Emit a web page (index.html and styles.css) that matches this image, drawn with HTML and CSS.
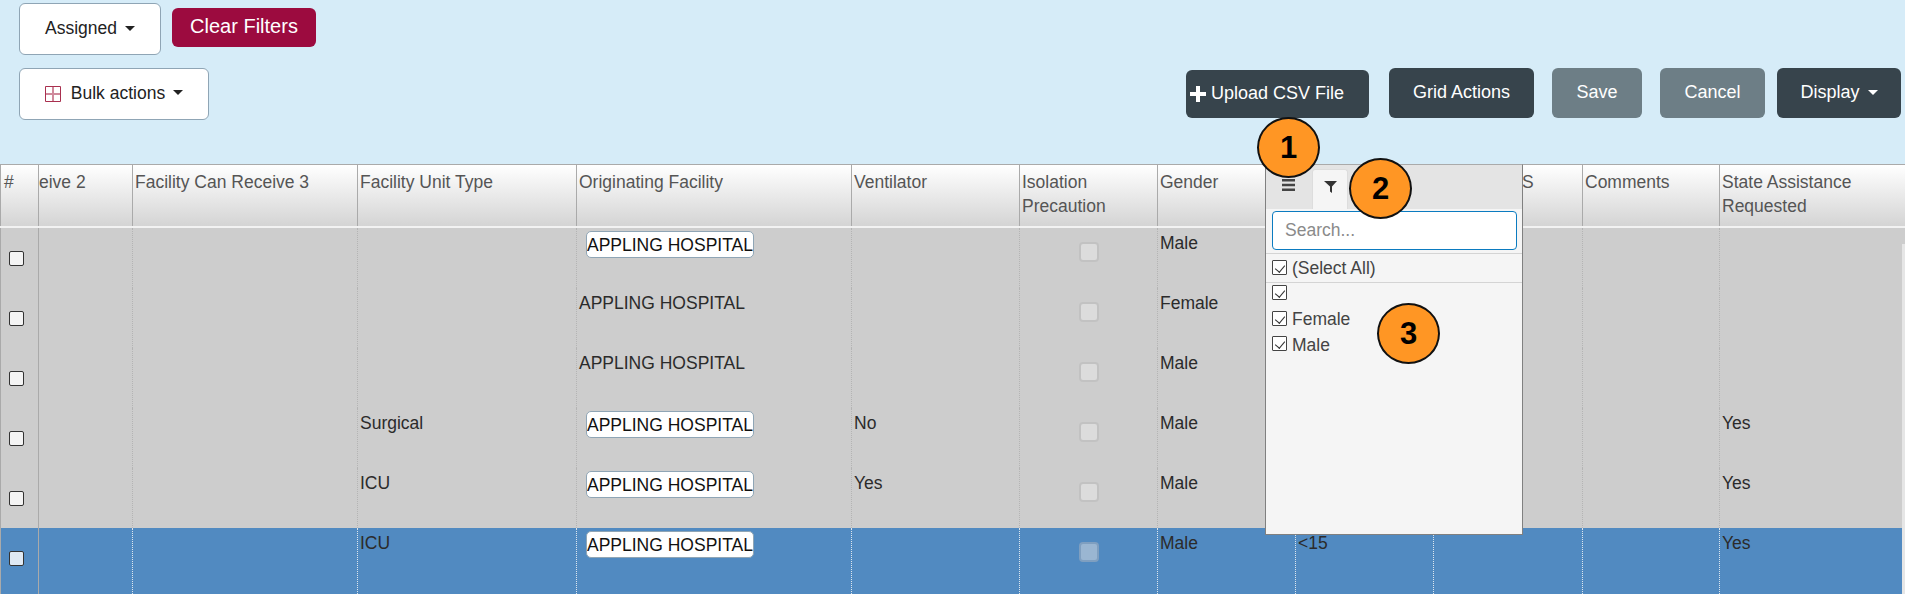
FILE: index.html
```html
<!DOCTYPE html>
<html lang="en">
<head>
  <meta charset="UTF-8" />
  <title>Patient Grid</title>
  <link rel="stylesheet" href="styles.css">
</head>
<body>

<div class="toolbar">
  <div class="filter-row">
    <button class="btn btn-light btn-assigned">Assigned <span class="caret"></span></button>
    <button class="btn btn-clear">Clear Filters</button>
  </div>
  <div class="action-row">
    <button class="btn btn-light btn-bulk">
      <svg class="bulk-icon" width="16" height="16" viewBox="0 0 16 16"><path d="M8 1v14M1 8h14" fill="none" stroke="#cf8a9c" stroke-width="2"/><path d="M.5.5h15v15H.5z" fill="none" stroke="#a9304f"/></svg>
      Bulk actions <span class="caret"></span>
    </button>
    <div class="grid-buttons">
      <button class="btn btn-dark btn-upload">
        <svg width="16" height="16" viewBox="0 0 16 16"><path d="M6 0h4v6h6v4h-6v6H6v-6H0V6h6z" fill="#fff"/></svg>
        Upload CSV File
      </button>
      <button class="btn btn-dark btn-grid">Grid Actions</button>
      <button class="btn btn-muted btn-save">Save</button>
      <button class="btn btn-muted btn-cancel">Cancel</button>
      <button class="btn btn-dark btn-display">Display <span class="caret"></span></button>
    </div>
  </div>
</div>

<div class="grid">
  <div class="row header">
    <div class="cell">#</div>
    <div class="cell clipped">eive 2</div>
    <div class="cell">Facility Can Receive 3</div>
    <div class="cell">Facility Unit Type</div>
    <div class="cell">Originating Facility</div>
    <div class="cell">Ventilator</div>
    <div class="cell">Isolation Precaution</div>
    <div class="cell">Gender</div>
    <div class="cell"></div>
    <div class="cell peek">S</div>
    <div class="cell">Comments</div>
    <div class="cell">State Assistance Requested</div>
  </div>

  <div class="row">
    <div class="cell"><span class="check"></span></div>
    <div class="cell"></div>
    <div class="cell"></div>
    <div class="cell"></div>
    <div class="cell"><span class="hospital">APPLING HOSPITAL</span></div>
    <div class="cell"></div>
    <div class="cell"><span class="check-off"></span></div>
    <div class="cell">Male</div>
    <div class="cell"></div>
    <div class="cell"></div>
    <div class="cell"></div>
    <div class="cell"></div>
  </div>
  <div class="row">
    <div class="cell"><span class="check"></span></div>
    <div class="cell"></div>
    <div class="cell"></div>
    <div class="cell"></div>
    <div class="cell">APPLING HOSPITAL</div>
    <div class="cell"></div>
    <div class="cell"><span class="check-off"></span></div>
    <div class="cell">Female</div>
    <div class="cell"></div>
    <div class="cell"></div>
    <div class="cell"></div>
    <div class="cell"></div>
  </div>
  <div class="row">
    <div class="cell"><span class="check"></span></div>
    <div class="cell"></div>
    <div class="cell"></div>
    <div class="cell"></div>
    <div class="cell">APPLING HOSPITAL</div>
    <div class="cell"></div>
    <div class="cell"><span class="check-off"></span></div>
    <div class="cell">Male</div>
    <div class="cell"></div>
    <div class="cell"></div>
    <div class="cell"></div>
    <div class="cell"></div>
  </div>
  <div class="row">
    <div class="cell"><span class="check"></span></div>
    <div class="cell"></div>
    <div class="cell"></div>
    <div class="cell">Surgical</div>
    <div class="cell"><span class="hospital">APPLING HOSPITAL</span></div>
    <div class="cell">No</div>
    <div class="cell"><span class="check-off"></span></div>
    <div class="cell">Male</div>
    <div class="cell"></div>
    <div class="cell"></div>
    <div class="cell"></div>
    <div class="cell">Yes</div>
  </div>
  <div class="row">
    <div class="cell"><span class="check"></span></div>
    <div class="cell"></div>
    <div class="cell"></div>
    <div class="cell">ICU</div>
    <div class="cell"><span class="hospital">APPLING HOSPITAL</span></div>
    <div class="cell">Yes</div>
    <div class="cell"><span class="check-off"></span></div>
    <div class="cell">Male</div>
    <div class="cell"></div>
    <div class="cell"></div>
    <div class="cell"></div>
    <div class="cell">Yes</div>
  </div>
  <div class="row selected">
    <div class="cell"><span class="check"></span></div>
    <div class="cell"></div>
    <div class="cell"></div>
    <div class="cell">ICU</div>
    <div class="cell"><span class="hospital">APPLING HOSPITAL</span></div>
    <div class="cell"></div>
    <div class="cell"><span class="check-off"></span></div>
    <div class="cell">Male</div>
    <div class="cell">&lt;15</div>
    <div class="cell"></div>
    <div class="cell"></div>
    <div class="cell">Yes</div>
  </div>

  <div class="scroll-strip"></div>
</div>

<div class="filter-menu">
  <div class="menu-tabs">
    <div class="menu-tab">
      <svg width="13" height="12" viewBox="0 0 13 12"><path d="M0 0h13v2.500H0zM0 4.700h13v2.500H0zM0 9.500h13V12H0z" fill="#444"/></svg>
    </div>
    <div class="menu-tab active">
      <svg width="13" height="12" viewBox="0 0 13 12"><path d="M0 0h13L8 5.500V12L6 10.500V5.500z" fill="#333"/></svg>
    </div>
  </div>
  <div class="menu-search"><input type="text" placeholder="Search..."></div>
  <div class="menu-all"><span class="tick"></span>(Select All)</div>
  <div class="menu-list">
    <div class="menu-item"><span class="tick"></span></div>
    <div class="menu-item"><span class="tick"></span>Female</div>
    <div class="menu-item"><span class="tick"></span>Male</div>
  </div>
</div>

<div class="marker marker-1">1</div>
<div class="marker marker-2">2</div>
<div class="marker marker-3">3</div>

</body>
</html>
```

FILE: styles.css
```css
* {
  box-sizing: border-box;
}
html, body {
  height: 594px;
  overflow: hidden;
}
body {
  margin: 0;
  font-family: "Liberation Sans", Arial, sans-serif;
  font-size: 17.5px;
  line-height: 24px;
  background: #d6ecf8;
  color: #333;
}

/* toolbar */
.toolbar {
  height: 164px;
  padding: 3px 4px 0 19px;
}
.filter-row {
  display: flex;
  align-items: flex-start;
  gap: 11px;
}
.action-row {
  display: flex;
  align-items: flex-start;
  justify-content: space-between;
  margin-top: 13px;
}
.grid-buttons {
  display: flex;
  align-items: flex-end;
}
.btn {
  font-family: inherit;
  font-size: 18px;
  line-height: 24px;
  border-radius: 6px;
  padding: 0 0 3px;
  border: 1px solid transparent;
  white-space: nowrap;
}
.btn-light {
  background: #fff;
  border-color: #8fa5b5;
  color: #222;
  height: 52px;
  font-size: 17.5px;
}
.btn-assigned { width: 142px; }
.btn-bulk {
  width: 190px;
  display: flex;
  align-items: center;
  justify-content: center;
  gap: 5px;
}
.bulk-icon { margin: 3px 5px 0 0; }
.btn-clear {
  width: 144px;
  height: 39px;
  margin-top: 5px;
  background: #9c0b3f;
  color: #fff;
  font-size: 20px;
}
.btn-dark {
  background: #37444c;
  color: #fff;
}
.btn-muted {
  background: #6d7e86;
  color: #fff;
}
.btn-upload {
  width: 183px;
  height: 48px;
  margin-right: 20px;
  display: flex;
  align-items: center;
  padding-left: 3px;
  gap: 5px;
}
.btn-upload svg { margin-top: 3px; }
.btn-grid { width: 145px; height: 50px; margin-right: 18px; }
.btn-save { width: 90px; height: 50px; margin-right: 18px; }
.btn-cancel { width: 105px; height: 50px; margin-right: 12px; }
.btn-display { width: 124px; height: 50px; }
.caret {
  display: inline-block;
  width: 0;
  height: 0;
  margin-left: 3px;
  vertical-align: middle;
  border-top: 5px solid currentColor;
  border-left: 5px solid transparent;
  border-right: 5px solid transparent;
}

/* grid */
.grid {
  position: relative;
  border-top: 1px solid #aaa;
}
.row {
  display: grid;
  grid-template-columns: 38px 94px 225px 219px 275px 168px 138px 138px 138px 149px 137px 186px;
  height: 60px;
  background: #cdcdcd;
}
.cell {
  padding: 3px 2px 0 2px;
  border-left: 1px dotted #b4b4b4;
  overflow: hidden;
  color: #2b2b2b;
}
.cell:first-child {
  border-left: 1px solid #aaa;
  padding: 0 0 0 8px;
  display: flex;
  align-items: center;
}
.cell:nth-child(2) {
  border-left: 1px solid #aaa;
}
.cell:nth-child(7) {
  display: flex;
  justify-content: center;
  padding: 14px 0 0;
}
.header {
  height: 63px;
  background: linear-gradient(#fff, #d4d4d4);
  border-bottom: 2px solid;
  border-image: linear-gradient(#aaa 50%, #f2f2f2 50%) 2;
}
.header .cell {
  border-left: 1px solid #aaa;
  padding: 5px 2px 0 2px;
  color: #555;
  display: block;
}
.header .cell:first-child { padding-left: 3px; }
.header .clipped { padding-left: 0; }
.header .peek { padding-left: 88px; }
.selected {
  background: #518ac1;
  height: 66px;
}
.selected .cell {
  border-left-color: #dde6ee;
}
.selected .cell:first-child,
.selected .cell:nth-child(2) {
  border-left-color: #aaa;
}
.selected .cell:nth-child(2) {
  border-left-style: solid;
}
.selected .check { background: #dfe9f3; margin-top: -6px; }
.selected .check-off {
  background: #9ab6d2;
  border-color: #7f9fc0;
}
.check {
  width: 15px;
  height: 15px;
  border: 1px solid #333;
  border-radius: 2px;
  background: #f4f4f4;
}
.check-off {
  width: 20px;
  height: 20px;
  border: 2px solid #c2c2c2;
  border-radius: 4px;
  background: #dcdcdc;
}
.hospital {
  display: inline-block;
  width: 168px;
  height: 27px;
  margin: 0 0 0 7px;
  background: #fff;
  border: 1px solid #8fa5b5;
  border-radius: 5px;
  color: #111;
  line-height: 26px;
  white-space: nowrap;
  overflow: hidden;
}
.scroll-strip {
  position: absolute;
  right: 0;
  top: 79px;
  bottom: 0;
  width: 3px;
  background: #e6e6e6;
}

/* filter popup */
.filter-menu {
  position: absolute;
  left: 1265px;
  top: 164px;
  width: 258px;
  height: 371px;
  background: #f5f5f5;
  border: 1px solid #808080;
  border-top-color: #aaa;
  color: #444;
}
.menu-tabs {
  display: flex;
  height: 44px;
  background: #e4e4e4;
}
.menu-tab {
  width: 46px;
  display: flex;
  align-items: center;
  justify-content: center;
  padding: 0 2px 4px 0;
}
.menu-tab.active {
  width: 36px;
  background: #f5f5f5;
  border: 1px solid #ddd;
  border-bottom: none;
  border-radius: 3px 3px 0 0;
  margin-top: 4px;
  padding: 0 0 6px;
}
.menu-search {
  height: 45px;
  padding: 2px 5px 0 6px;
  border-bottom: 1px solid #d4d4d4;
}
.menu-search input {
  display: block;
  width: 100%;
  height: 39px;
  padding: 0 12px;
  border: 1px solid #0b7bc0;
  border-radius: 4px;
  font-family: inherit;
  font-size: 17.5px;
  background: #fff;
}
.menu-search input::placeholder {
  color: #8a8a8a;
}
.menu-all {
  display: flex;
  align-items: center;
  height: 29px;
  padding-left: 6px;
  border-bottom: 1px solid #d4d4d4;
}
.menu-list {
  margin-top: -2px;
}
.menu-item {
  display: flex;
  align-items: center;
  height: 25.5px;
  padding-left: 6px;
}
.tick {
  position: relative;
  flex: none;
  width: 15px;
  height: 15px;
  margin: 0 5px 2px 0;
  border: 1px solid #444;
  border-radius: 1px;
  background: #fff;
}
.tick::after {
  content: "";
  position: absolute;
  left: 4px;
  top: 2px;
  width: 5px;
  height: 8px;
  border-right: 1px solid #333;
  border-bottom: 1px solid #333;
  transform: rotate(40deg);
}

/* numbered callouts */
.marker {
  position: absolute;
  width: 63px;
  height: 61px;
  border: 2px solid #111;
  border-radius: 50%;
  background: #ff9624;
  color: #000;
  font-size: 31px;
  font-weight: bold;
  line-height: 57px;
  text-align: center;
}
.marker-1 { left: 1257px; top: 117px; }
.marker-2 { left: 1349px; top: 158px; }
.marker-3 { left: 1377px; top: 303px; }
```
